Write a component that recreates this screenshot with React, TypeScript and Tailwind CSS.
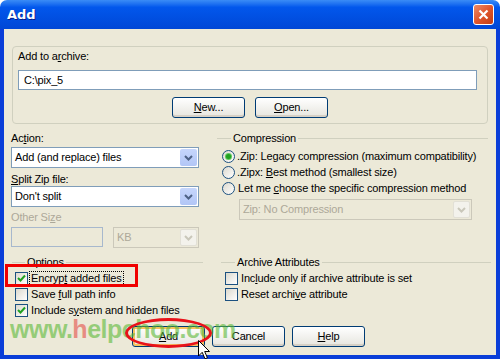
import React from 'react';

const font = { fontFamily: '"Liberation Sans", Arial, sans-serif' };

const Chevron: React.FC<{ disabled?: boolean }> = ({ disabled }) => (
  <svg width="9" height="6" viewBox="0 0 9 6">
    <path d="M1 1 L4.5 4.5 L8 1" fill="none" stroke={disabled ? '#C9C7BA' : '#4D6185'} strokeWidth="2" />
  </svg>
);

const Dropdown: React.FC<{ value: string; className?: string; disabled?: boolean }> = ({ value, className, disabled }) => (
  <div
    className={`flex items-center h-[21px] border ${disabled ? 'border-[#CBC8BA] bg-[#ECE9D8] text-[#ACA899]' : 'border-[#7F9DB9] bg-white text-black'} ${className ?? ''}`}
  >
    <span className="flex-1 pl-[3px] whitespace-nowrap overflow-hidden">{value}</span>
    <div
      className={`w-[17px] h-[17px] mr-[1px] rounded-[2px] flex items-center justify-center ${disabled ? 'bg-[#F3F2EC] border border-[#E2E0D6]' : 'bg-linear-to-b from-[#C6D6FC] to-[#B2C6F6]'}`}
    >
      <Chevron disabled={disabled} />
    </div>
  </div>
);

const Button: React.FC<{ children: React.ReactNode; isDefault?: boolean }> = ({ children, isDefault }) => (
  <div
    className={`w-[73px] h-[21px] rounded-[3px] border border-[#003C74] bg-linear-to-b from-white to-[#E6E5DE] flex items-center justify-center text-black ${isDefault ? 'shadow-[inset_0_0_0_2px_#F7C35E]' : 'shadow-[inset_0_-2px_0_#D6D0C5]'}`}
  >
    {children}
  </div>
);

const Radio: React.FC<{ checked?: boolean }> = ({ checked }) => (
  <div className="w-[13px] h-[13px] rounded-full border border-[#1C5180] bg-linear-to-br from-[#DCD9CE] to-white flex items-center justify-center shrink-0">
    {checked && <div className="w-[5px] h-[5px] rounded-full bg-[#21A121] shadow-[0_0_0_1px_#5FC85F]" />}
  </div>
);

const Check: React.FC<{ checked?: boolean }> = ({ checked }) => (
  <div className="w-[13px] h-[13px] border border-[#1C5180] bg-linear-to-br from-[#DCD9CE] to-white flex items-center justify-center shrink-0">
    {checked && (
      <svg width="9" height="9" viewBox="0 0 9 9">
        <path d="M1 4 L3.5 6.5 L8 1.5" fill="none" stroke="#21A121" strokeWidth="2" />
      </svg>
    )}
  </div>
);

const GroupHeader: React.FC<{ label: string; lead: number }> = ({ label, lead }) => (
  <div className="flex items-center h-[13px]">
    <div className="h-px bg-[#D0D0BF]" style={{ width: lead }} />
    <span className="px-[2px] whitespace-nowrap">{label}</span>
    <div className="h-px flex-1 bg-[#D0D0BF]" />
  </div>
);

const App: React.FC = () => {
  return (
    <div className="relative w-[500px] h-[359px] flex flex-col bg-white text-[11px] leading-[13px] tracking-[-0.16px] select-none" style={font}>
      {/* title bar */}
      <div className="h-[29px] shrink-0 rounded-t-[7px] bg-linear-to-b from-[#3A8CF6] via-[#0257EC] via-25% to-[#0047D6] flex items-center justify-between pl-[7px] pr-[6px]">
        <span
          className="text-white font-bold text-[13px] tracking-normal [text-shadow:1px_1px_0_#0A1E8C]"
          style={{ fontFamily: '"DejaVu Sans", sans-serif' }}
        >
          Add
        </span>
        <div className="w-[21px] h-[21px] rounded-[3px] border border-white bg-linear-to-br from-[#EC8A66] via-[#E0552B] to-[#C23D14] flex items-center justify-center">
          <svg width="11" height="11" viewBox="0 0 11 11">
            <path d="M1.5 1.5 L9.5 9.5 M9.5 1.5 L1.5 9.5" stroke="white" strokeWidth="2.2" />
          </svg>
        </div>
      </div>

      {/* client */}
      <div className="flex-1 bg-[#ECE9D8] border-x-4 border-b-4 border-[#0A3ED8] flex flex-col">
        {/* Add to archive group */}
        <div className="mt-[17px] ml-[8px] w-[476px] h-[78px] border border-[#D0D0BF] rounded-[4px] pt-[3px] pl-[5px]">
          <div>
            Add to a<u className="underline-offset-1">r</u>chive:
          </div>
          <div className="mt-[7px] w-[459px] h-[20px] border border-[#7F9DB9] bg-white flex items-center pl-[5px]">C:\pix_5</div>
          <div className="mt-[7px] ml-[154px] flex gap-[10px]">
            <Button>
              <u>N</u>ew...
            </Button>
            <Button>
              <u>O</u>pen...
            </Button>
          </div>
        </div>

        {/* action + compression */}
        <div className="flex">
          <div className="ml-[7px] w-[188px] pt-[8px]">
            <div>
              Ac<u>t</u>ion:
            </div>
            <Dropdown value="Add (and replace) files" className="mt-[2px]" />
            <div className="mt-[5px]">
              <u>S</u>plit Zip file:
            </div>
            <Dropdown value="Don't split" />
            <div className="mt-[4px] text-[#ACA899]">
              Other Si<u>z</u>e
            </div>
            <div className="mt-[3px] flex justify-between">
              <div className="w-[92px] h-[20px] border border-[#A7B8CD] bg-[#ECE9D8]" />
              <Dropdown value="KB" disabled className="w-[86px] h-[20px]" />
            </div>
          </div>
          <div className="ml-[18px] w-[271px] pt-[8px]">
            <GroupHeader label="Compression" lead={14} />
            <div className="mt-[3px] ml-[5px]">
              <div className="h-[16px] flex items-center gap-[2px]">
                <Radio checked />
                <span>
                  .Zip: Le<u>g</u>acy compression (maximum compatibility)
                </span>
              </div>
              <div className="h-[16px] flex items-center gap-[2px]">
                <Radio />
                <span>
                  .Zipx: <u>B</u>est method (smallest size)
                </span>
              </div>
              <div className="h-[16px] flex items-center gap-[3px]">
                <Radio />
                <span>
                  Let me <u>c</u>hoose the specific compression method
                </span>
              </div>
            </div>
            <Dropdown value="Zip: No Compression" disabled className="mt-[3px] ml-[22px] w-[233px] h-[20px]" />
          </div>
        </div>

        {/* options + archive attributes */}
        <div className="flex">
          <div className="ml-[8px] w-[191px] pt-[8px]">
            <GroupHeader label="Options" lead={13} />
            <div className="mt-[1px] ml-[3px]">
              <div className="h-[16px] flex items-center gap-[2px]">
                <Check checked />
                <span className="outline-1 outline-dotted outline-black px-px">
                  Encryp<u>t</u> added files
                </span>
              </div>
              <div className="h-[16px] flex items-center gap-[3px]">
                <Check />
                <span>
                  Save <u>f</u>ull path info
                </span>
              </div>
              <div className="h-[16px] flex items-center gap-[3px]">
                <Check checked />
                <span>
                  Include s<u>y</u>stem and hidden files
                </span>
              </div>
            </div>
          </div>
          <div className="ml-[18px] w-[270px] pt-[8px]">
            <GroupHeader label="Archive Attributes" lead={14} />
            <div className="mt-[1px] ml-[4px]">
              <div className="h-[16px] flex items-center gap-[3px]">
                <Check />
                <span>
                  Inc<u>l</u>ude only if archive attribute is set
                </span>
              </div>
              <div className="h-[16px] flex items-center gap-[3px]">
                <Check />
                <span>
                  Reset archi<u>v</u>e attribute
                </span>
              </div>
            </div>
          </div>
        </div>

        {/* buttons */}
        <div className="mt-[8px] ml-[128px] flex gap-[7px]">
          <Button isDefault>
            <u>A</u>dd
          </Button>
          <Button>Cancel</Button>
          <Button>
            <u>H</u>elp
          </Button>
        </div>
      </div>

      {/* annotations over the screenshot */}
      <div className="absolute left-[5px] top-[264px] w-[133px] h-[23px] border-[3px] border-[#F00000]" />
      <div
        className="absolute left-[10px] top-[314px] text-[25px] leading-[30px] font-bold tracking-[-0.5px] text-[#5DB93A] opacity-60 whitespace-nowrap"
        style={{ fontFamily: '"Liberation Sans", Arial, sans-serif' }}
      >
        www.<span className="text-[#E4504A]">h</span>elpchoo.com
      </div>
      <div className="absolute left-[125px] top-[318px] w-[87px] h-[30px] rounded-[50%] border-[3px] border-[#E8121A]" />
      <svg className="absolute left-[198px] top-[340px]" width="13" height="20" viewBox="0 0 13 20">
        <path d="M0.5 0.5 L0.5 16 L4.2 12.3 L7 18.8 L9.4 17.8 L6.7 11.5 L11.5 11.5 Z" fill="white" stroke="black" strokeWidth="1" />
      </svg>
    </div>
  );
};

export default App;
